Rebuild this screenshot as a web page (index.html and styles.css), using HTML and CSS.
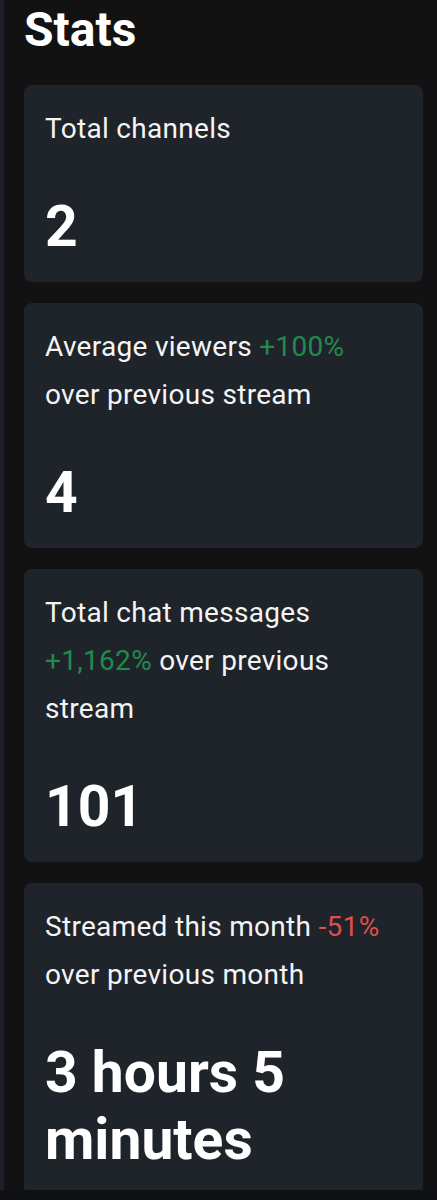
FILE: index.html
```html
<!DOCTYPE html>
<html lang="en">
<head>
    <meta charset="UTF-8">
    <meta name="viewport" content="width=device-width, initial-scale=1.0">
    <title>Stats</title>
    <link rel="stylesheet" href="styles.css">
</head>
<body>
    <div class="page">
        <h2 class="title">Stats</h2>
        <div class="stat-card">
            <p class="stat-label">Total channels</p>
            <p class="stat-value">2</p>
        </div>
        <div class="stat-card">
            <p class="stat-label">Average viewers <span class="up">+100%</span> over previous stream</p>
            <p class="stat-value">4</p>
        </div>
        <div class="stat-card">
            <p class="stat-label">Total chat messages <span class="up">+1,162%</span> over previous stream</p>
            <p class="stat-value">101</p>
        </div>
        <div class="stat-card">
            <p class="stat-label">Streamed this month <span class="down">-51%</span> over previous month</p>
            <p class="stat-value">3 hours 5 minutes</p>
        </div>
    </div>
    <div class="bottom-bar"></div>
</body>
</html>
```

FILE: styles.css
```css
body {
    font-family: 'Roboto', 'Liberation Sans', sans-serif;
    margin: 0;
    padding: 0;
    background: #121212;
    color: #f4f4f4;
}

.page {
    border-left: 4px solid #1b2026;
    padding: 2px 14px 0 20px;
    min-height: 1200px;
    box-sizing: border-box;
}

.title {
    margin: 0 0 27px;
    font-size: 48px;
    line-height: 56px;
    font-weight: 700;
    color: #fff;
}

.stat-card {
    background: #1f232a;
    border-radius: 8px;
    padding: 20px 26px 22px 21px;
    margin-bottom: 21px;
}

.stat-label {
    margin: 0 0 40px;
    font-size: 28px;
    line-height: 48px;
    letter-spacing: 0.3px;
}

.stat-value {
    margin: 0;
    font-size: 57px;
    line-height: 67px;
    font-weight: 700;
    color: #fff;
}

.up {
    color: #1f8b4c;
}

.down {
    color: #dd4f4b;
}

.bottom-bar {
    position: fixed;
    left: 0;
    right: 0;
    bottom: 0;
    height: 10px;
    background: #0f1014;
}
```
